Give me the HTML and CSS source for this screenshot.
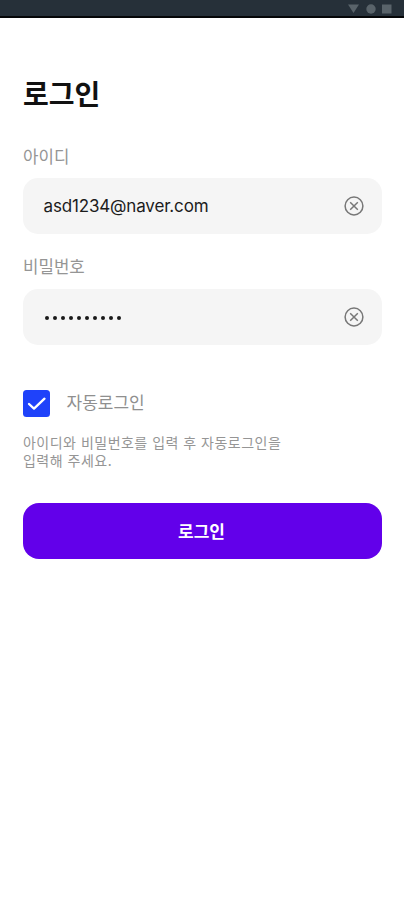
FILE: index.html
```
<!DOCTYPE html>
<html lang="ko">
<head>
<meta charset="utf-8">
<title>로그인</title>
<link rel="stylesheet" href="styles.css">
</head>
<body>
<header class="status">
  <svg width="44" height="12" viewBox="0 0 44 12"><path d="M0 1.5h11L5.5 10z"/><circle cx="23" cy="6" r="4.7"/><path d="M34 1.5h9.5v9H34z"/></svg>
</header>
<main class="login">
  <h1 class="title">로그인</h1>
  <div class="label">아이디</div>
  <div class="field">
    <span class="value">asd1234@naver.com</span>
    <svg class="clear" viewBox="0 0 20 20"><circle cx="10" cy="10" r="8.9"/><path d="M6.2 6.2l7.6 7.6M13.8 6.2l-7.6 7.6"/></svg>
  </div>
  <div class="label second">비밀번호</div>
  <div class="field">
    <span class="dots"><i></i><i></i><i></i><i></i><i></i><i></i><i></i><i></i><i></i><i></i></span>
    <svg class="clear" viewBox="0 0 20 20"><circle cx="10" cy="10" r="8.9"/><path d="M6.2 6.2l7.6 7.6M13.8 6.2l-7.6 7.6"/></svg>
  </div>
  <div class="auto">
    <svg class="check" viewBox="0 0 27 27"><rect width="27" height="27" rx="3.5"/><path d="M6 14l5 4.6L21.5 8.7"/></svg>
    <span class="auto-text">자동로그인</span>
  </div>
  <p class="help">아이디와 비밀번호를 입력 후 자동로그인을<br>입력해 주세요.</p>
  <button class="submit">로그인</button>
</main>
</body>
</html>
```
FILE: styles.css
```
* { box-sizing: border-box; }
body {
  margin: 0;
  background: #fff;
  font-family: "Noto Sans CJK KR", sans-serif;
}
.status {
  height: 18px;
  display: flex;
  justify-content: flex-end;
  padding: 3px 12px 0 0;
  background: #263039;
  border-bottom: 2px solid #050608;
}
.status svg { fill: #59636a; }
.login { padding: 55px 22px 0 23px; }
.title {
  margin: 0;
  font-size: 28px;
  line-height: 40px;
  font-weight: 700;
  color: #111;
}
.label {
  margin-top: 31px;
  height: 24px;
  margin-bottom: 10px;
  font-size: 16.8px;
  line-height: 24px;
  color: #959595;
}
.label.second { margin-top: 20px; margin-bottom: 11px; }
.field {
  height: 56px;
  display: flex;
  align-items: center;
  justify-content: space-between;
  padding: 0 18px 0 20px;
  border-radius: 15px;
  background: #f5f5f5;
}
.value {
  padding-left: .5px;
  font-family: Inter, sans-serif;
  font-size: 17px;
  letter-spacing: -.16px;
  line-height: 24px;
  color: #1c1c1c;
}
.clear {
  width: 20px;
  height: 20px;
  fill: none;
  stroke: #777;
  stroke-width: 1.5;
}
.dots {
  display: flex;
  gap: 3.8px;
  padding: 2px 0 0 2px;
}
.dots i {
  width: 4.2px;
  height: 4.2px;
  border-radius: 50%;
  background: #191919;
}
.auto {
  display: flex;
  align-items: center;
  gap: 16.5px;
  height: 27px;
  margin-top: 45px;
  font-size: 17px;
  line-height: 24px;
  color: #8f8f8f;
}
.auto-text { padding-bottom: 3px; }
.check { width: 27px; height: 27px; }
.check rect { fill: #1f42fa; }
.check path {
  fill: none;
  stroke: #fff;
  stroke-width: 2.3;
  stroke-linecap: round;
  stroke-linejoin: round;
}
.help {
  margin: 16px 0 34px;
  font-size: 14px;
  letter-spacing: .49px;
  line-height: 18px;
  color: #959595;
}
.submit {
  display: block;
  width: 100%;
  height: 56px;
  padding: 0 2px 1px 0;
  border: 0;
  border-radius: 16px;
  background: #6200ea;
  color: #fff;
  font: 700 17px/24px "Noto Sans CJK KR", sans-serif;
}
```
